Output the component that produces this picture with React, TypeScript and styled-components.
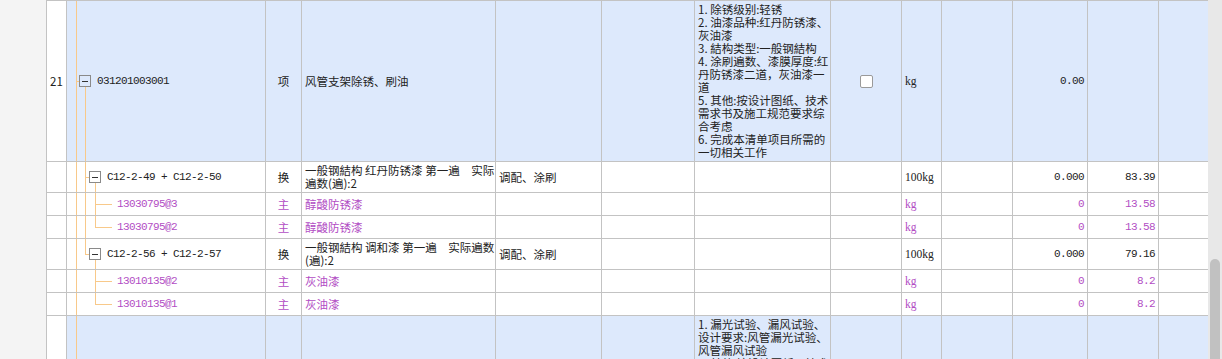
import React from 'react';
import styled, { createGlobalStyle } from 'styled-components';

const LINE = '#c3c3c3';
const TREE = '#f8c98a';
const BLUE = '#dde9fc';
const PURPLE = '#b24dc4';
const COLS = '20px 199px 36px 194px 106px 93px 136px 71px 40px 71px 75px 71px 49px';

const GlobalStyle = createGlobalStyle`
    html, body {
        margin: 0;
        padding: 0;
        background: #fff;
    }

    body {
        font-family: "Noto Sans CJK SC", "Liberation Sans", sans-serif;
        font-size: 11.5px;
        color: #222;
    }
`;

const Page = styled.div`
    display: flex;
    width: 1222px;
    height: 359px;
    overflow: hidden;
`;

const Gutter = styled.div`
    flex: none;
    width: 47px;
    box-sizing: border-box;
    background: #f4f4f4;
    border-right: 1px solid ${LINE};
`;

const Grid = styled.div`
    flex: none;
    width: 1161px;
    border-top: 1px solid ${LINE};
`;

const Row = styled.div<{ $h?: number; $blue?: boolean; $sub?: boolean }>`
    display: grid;
    grid-template-columns: ${COLS};
    height: ${(p) => (p.$h ? `${p.$h}px` : 'auto')};
    background: ${(p) => (p.$blue ? BLUE : '#fff')};
    color: ${(p) => (p.$sub ? PURPLE : '#222')};
    line-height: 13px;
`;

const Cell = styled.div<{ $align?: 'left' | 'center' | 'right' }>`
    box-sizing: border-box;
    display: flex;
    align-items: center;
    justify-content: ${(p) =>
        p.$align === 'center' ? 'center' : p.$align === 'right' ? 'flex-end' : 'flex-start'};
    padding: 0 3px;
    min-width: 0;
    overflow: hidden;
    white-space: nowrap;
    border-right: 1px solid ${LINE};
    border-bottom: 1px solid ${LINE};

    &:last-child {
        border-right: none;
    }
`;

const NumCell = styled(Cell)`
    background: #fff;
    padding: 0;
    color: #222;
`;

const TreeCell = styled(Cell)`
    align-items: stretch;
    padding: 0;
`;

const LinesCell = styled(Cell)<{ $top?: boolean }>`
    flex-direction: column;
    align-items: flex-start;
    justify-content: ${(p) => (p.$top ? 'flex-start' : 'center')};
    padding: 2px 3px;
`;

const Mono = styled.span`
    font-family: "Liberation Mono", "DejaVu Sans Mono", monospace;
    font-size: 11px;
    letter-spacing: -0.6px;
`;

const Unit = styled.span`
    font-family: "Liberation Serif", serif;
    font-size: 11.5px;
`;

type V = 'full' | 'top' | 'none';

interface Seg {
    w: number;
    x: number;
    v: V;
    stub?: boolean;
}

function guideLayers(s: Seg) {
    const img: string[] = [];
    const size: string[] = [];
    const pos: string[] = [];
    const g = `linear-gradient(${TREE}, ${TREE})`;
    if (s.v === 'full') {
        img.push(g);
        size.push('1px 100%');
        pos.push(`${s.x}px 0`);
    }
    if (s.v === 'top') {
        img.push(g);
        size.push('1px 50%');
        pos.push(`${s.x}px 0`);
    }
    if (s.stub) {
        img.push(g);
        size.push(`${s.w - s.x}px 1px`);
        pos.push(`${s.x}px 50%`);
    }
    return {
        img: img.length ? img.join(', ') : 'none',
        size: size.join(', ') || 'auto',
        pos: pos.join(', ') || '0 0',
    };
}

const Guide = styled.span<{ $seg: Seg }>`
    flex: none;
    width: ${(p) => p.$seg.w}px;
    background-repeat: no-repeat;
    background-image: ${(p) => guideLayers(p.$seg).img};
    background-size: ${(p) => guideLayers(p.$seg).size};
    background-position: ${(p) => guideLayers(p.$seg).pos};
`;

/* column holding the +/- box, with the branch line running down from it */
const ToggleCol = styled.span`
    flex: none;
    width: 12px;
    display: flex;
    align-items: center;
    background-image: linear-gradient(${TREE}, ${TREE});
    background-repeat: no-repeat;
    background-size: 1px calc(50% - 6px);
    background-position: 6px 100%;
`;

const Toggle = styled.span`
    width: 12px;
    height: 12px;
    box-sizing: border-box;
    border: 1px solid #8a8a8a;
    display: flex;
    align-items: center;
    justify-content: center;

    &::before {
        content: '';
        width: 6px;
        height: 1px;
        background: #333;
    }
`;

const CodeText = styled(Mono)<{ $gap: number }>`
    align-self: center;
    margin-left: ${(p) => p.$gap}px;
`;

const Check = styled.span`
    width: 13px;
    height: 13px;
    box-sizing: border-box;
    border: 1px solid #9a9a9a;
    border-radius: 2px;
    background: #fff;
`;

const Track = styled.div`
    flex: none;
    width: 14px;
    box-sizing: border-box;
    padding: 259px 2px 0;
    background: #e8e8e8;
    display: flex;
    flex-direction: column;
`;

const Thumb = styled.div`
    flex: 1;
    background: #c1c1c1;
    border-radius: 5px 5px 0 0;
`;

interface Item {
    h?: number;
    blue?: boolean;
    sub?: boolean;
    no?: string;
    tree: Seg[];
    toggle?: boolean;
    code: string;
    kind: string;
    name: string[];
    work?: string;
    desc?: string[];
    check?: boolean;
    unit: string;
    qty: string;
    price?: string;
}

const G0: Seg = { w: 12, x: 9, v: 'full' };
const G0s: Seg = { ...G0, stub: true };
const G1 = (v: V, stub?: boolean): Seg => ({ w: 10, x: 6, v, stub });
const G2 = (v: V): Seg => ({ w: 23, x: 6, v, stub: true });

const items: Item[] = [
    {
        h: 161,
        blue: true,
        no: '21',
        tree: [G0s],
        toggle: true,
        code: '031201003001',
        kind: '项',
        name: ['风管支架除锈、刷油'],
        desc: [
            '1. 除锈级别:轻锈',
            '2. 油漆品种:红丹防锈漆、',
            '灰油漆',
            '3. 結构类型:一般钢結构',
            '4. 涂刷遍数、漆膜厚度:红',
            '丹防锈漆二道，灰油漆一',
            '道',
            '5. 其他:按设计图纸、技术',
            '需求书及施工规范要求综',
            '合考虑',
            '6. 完成本清单项目所需的',
            '一切相关工作',
        ],
        check: true,
        unit: 'kg',
        qty: '0.00',
    },
    {
        h: 31,
        tree: [G0, G1('full', true)],
        toggle: true,
        code: 'C12-2-49 + C12-2-50',
        kind: '换',
        name: ['一般钢結构 红丹防锈漆 第一遍　实际', '遍数(遍):2'],
        work: '调配、涂刷',
        unit: '100kg',
        qty: '0.000',
        price: '83.39',
    },
    {
        h: 23,
        sub: true,
        tree: [G0, G1('full'), G2('full')],
        code: '13030795@3',
        kind: '主',
        name: ['醇酸防锈漆'],
        unit: 'kg',
        qty: '0',
        price: '13.58',
    },
    {
        h: 23,
        sub: true,
        tree: [G0, G1('full'), G2('top')],
        code: '13030795@2',
        kind: '主',
        name: ['醇酸防锈漆'],
        unit: 'kg',
        qty: '0',
        price: '13.58',
    },
    {
        h: 31,
        tree: [G0, G1('top', true)],
        toggle: true,
        code: 'C12-2-56 + C12-2-57',
        kind: '换',
        name: ['一般钢結构 调和漆 第一遍　实际遍数', '(遍):2'],
        work: '调配、涂刷',
        unit: '100kg',
        qty: '0.000',
        price: '79.16',
    },
    {
        h: 23,
        sub: true,
        tree: [G0, G1('none'), G2('full')],
        code: '13010135@2',
        kind: '主',
        name: ['灰油漆'],
        unit: 'kg',
        qty: '0',
        price: '8.2',
    },
    {
        h: 23,
        sub: true,
        tree: [G0, G1('none'), G2('top')],
        code: '13010135@1',
        kind: '主',
        name: ['灰油漆'],
        unit: 'kg',
        qty: '0',
        price: '8.2',
    },
    {
        h: 200,
        blue: true,
        no: '22',
        tree: [G0s],
        toggle: true,
        code: '031201004001',
        kind: '项',
        name: ['风管漏光试验、漏风试验'],
        desc: [
            '1. 漏光试验、漏风试验、',
            '设计要求:风管漏光试验、',
            '风管漏风试验',
            '2. 其他:按设计图纸、技术',
            '需求书及施工规范要求综',
            '合考虑',
            '3. 完成本清单项目所需的',
            '一切相关工作',
        ],
        check: true,
        unit: '系统',
        qty: '0.00',
    },
];

function TreeRow({ item }: { item: Item }) {
    const textGap = item.toggle ? 6 : 5;
    return (
        <Row $h={item.h} $blue={item.blue} $sub={item.sub}>
            <NumCell $align="center">{item.no}</NumCell>
            <TreeCell>
                {item.tree.map((seg, i) => (
                    <Guide key={i} $seg={seg} />
                ))}
                {item.toggle && (
                    <ToggleCol>
                        <Toggle />
                    </ToggleCol>
                )}
                <CodeText $gap={textGap}>{item.code}</CodeText>
            </TreeCell>
            <Cell $align="center">{item.kind}</Cell>
            <LinesCell>
                {item.name.map((line, i) => (
                    <div key={i}>{line}</div>
                ))}
            </LinesCell>
            <Cell>{item.work}</Cell>
            <Cell />
            <LinesCell $top>
                {item.desc?.map((line, i) => (
                    <div key={i}>{line}</div>
                ))}
            </LinesCell>
            <Cell $align="center">{item.check && <Check />}</Cell>
            <Cell>
                <Unit>{item.unit}</Unit>
            </Cell>
            <Cell />
            <Cell $align="right">
                <Mono>{item.qty}</Mono>
            </Cell>
            <Cell $align="right">
                <Mono>{item.price}</Mono>
            </Cell>
            <Cell />
        </Row>
    );
}

export default function App() {
    return (
        <>
            <GlobalStyle />
            <Page>
                <Gutter />
                <Grid>
                    {items.map((item, i) => (
                        <TreeRow key={i} item={item} />
                    ))}
                </Grid>
                <Track>
                    <Thumb />
                </Track>
            </Page>
        </>
    );
}
